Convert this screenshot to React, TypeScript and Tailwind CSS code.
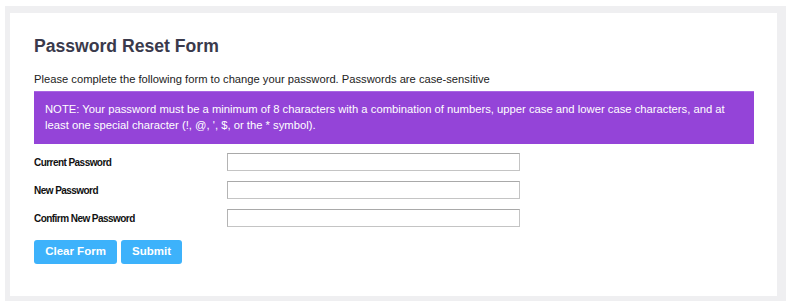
import { useState } from "react";

const fields = [
  { id: "current", label: "Current Password" },
  { id: "new", label: "New Password" },
  { id: "confirm", label: "Confirm New Password" },
];

export default function App() {
  const [values, setValues] = useState<Record<string, string>>({});

  return (
    <div
      className="min-h-screen bg-white pl-[5px] pt-[6px] pr-[6px] pb-[4px]"
      style={{ fontFamily: '"Liberation Sans", Arial, sans-serif' }}
    >
      <div className="bg-[#efeff1] pl-[5px] pt-[7px] pr-[9px] pb-[5px]">
        <div className="bg-white h-[283px] pl-[24px] pr-[23px] pt-[23px]">
          {/* Header */}
          <h1 className="text-[17.6px] leading-[21px] font-bold text-[#3a3a4c]">
            Password Reset Form
          </h1>
          <p className="mt-[14px] text-[11.2px] leading-[16px] text-[#222]">
            Please complete the following form to change your password. Passwords are case-sensitive
          </p>

          {/* Note */}
          <div className="mt-[4px] bg-[#9444d8] border-t border-[#a866e2] pl-[11px] pr-[28px] pt-[9px] pb-[11px] text-[11.25px] leading-[16px] text-white">
            NOTE: Your password must be a minimum of 8 characters with a combination of numbers, upper case and
            lower case characters, and at least one special character (!, @, ', $, or the * symbol).
          </div>

          {/* Fields */}
          <div className="mt-[9px] flex flex-col gap-[10px]">
            {fields.map((f) => (
              <div key={f.id} className="flex items-center">
                <label
                  htmlFor={f.id}
                  className="w-[193px] text-[10px] tracking-[-0.55px] font-bold text-[#111]"
                >
                  {f.label}
                </label>
                <input
                  id={f.id}
                  type="password"
                  value={values[f.id] ?? ""}
                  onChange={(e) => setValues({ ...values, [f.id]: e.target.value })}
                  className="w-[293px] h-[18px] border border-[#c4c4c4] border-t-[#a9a9a9] border-l-[#b4b4b4] bg-white"
                />
              </div>
            ))}
          </div>

          {/* Actions */}
          <div className="mt-[13px] flex gap-[4px]">
            <button
              type="button"
              onClick={() => setValues({})}
              className="w-[83px] h-[24px] rounded-[3px] bg-[#3db2fb] text-white text-[11.5px] font-bold"
            >
              Clear Form
            </button>
            <button
              type="button"
              className="w-[61px] h-[24px] rounded-[3px] bg-[#3db2fb] text-white text-[11.5px] font-bold"
            >
              Submit
            </button>
          </div>
        </div>
      </div>
    </div>
  );
}
